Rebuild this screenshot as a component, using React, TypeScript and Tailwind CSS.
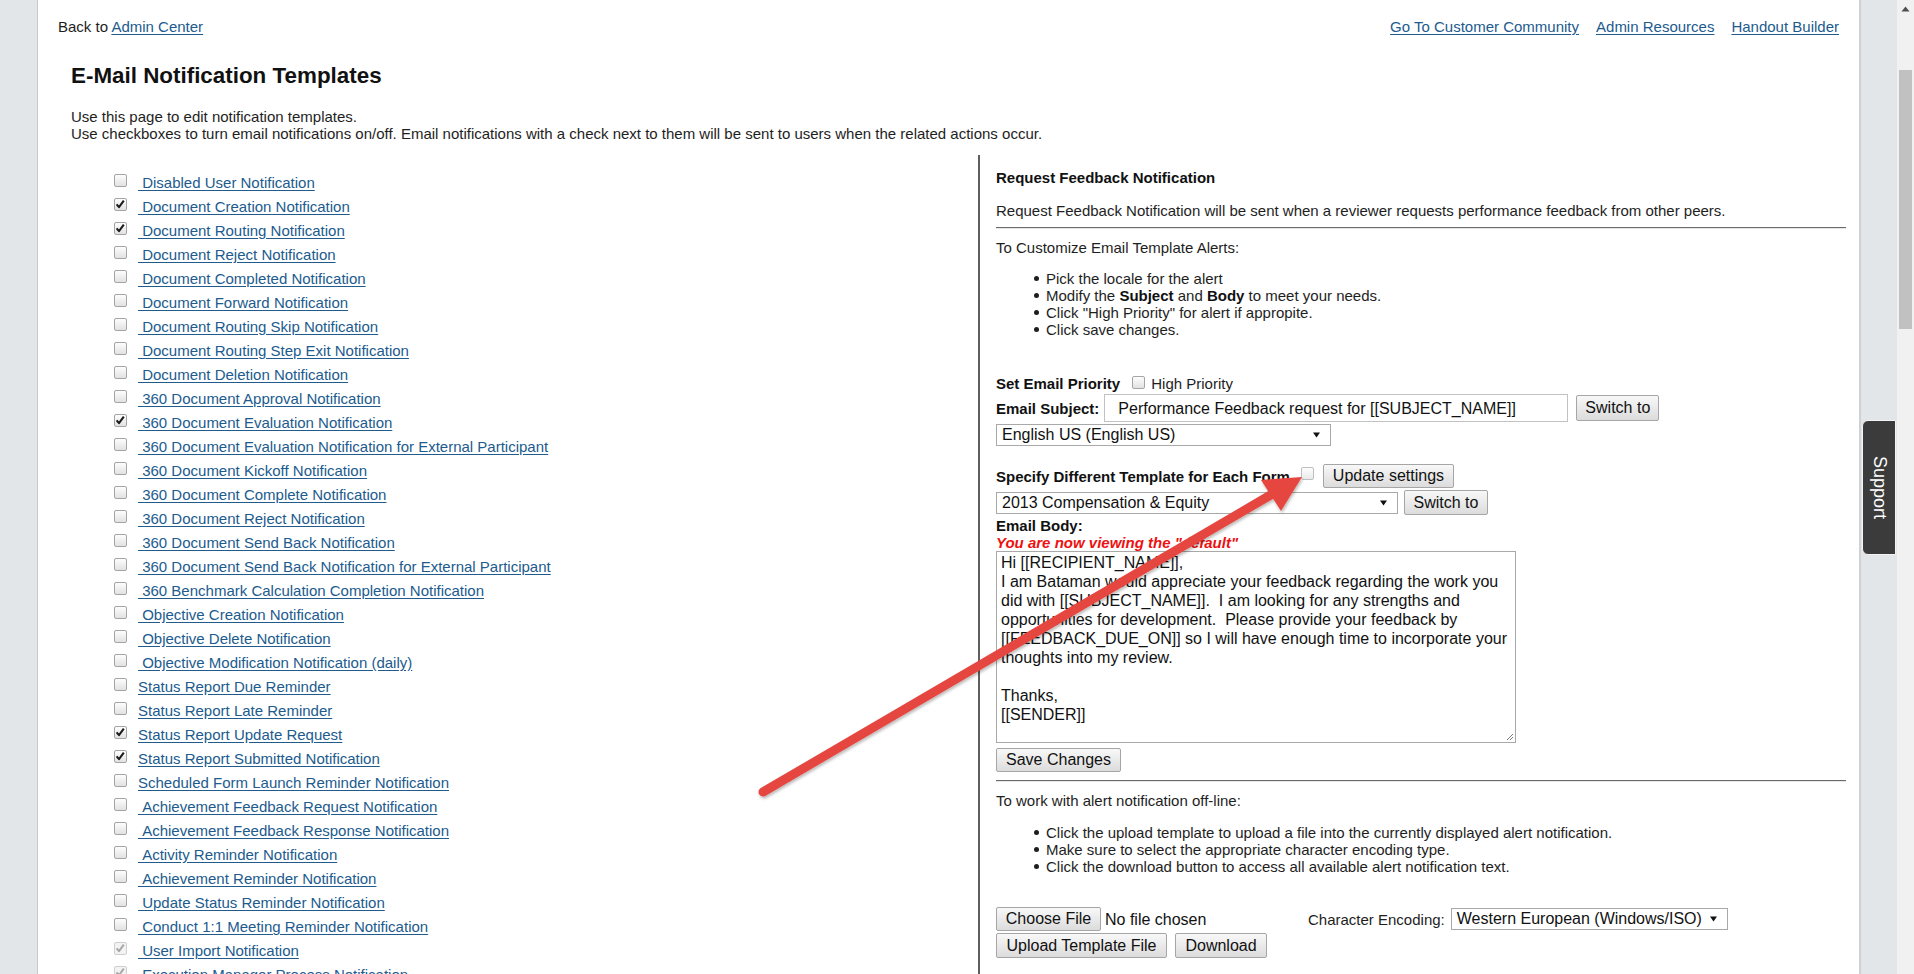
import React from "react";

type Item = { t: string; s: 0 | 1 | 2; sp: boolean };

const items: Item[] = [
  { t: "Disabled User Notification", s: 0, sp: true },
  { t: "Document Creation Notification", s: 1, sp: true },
  { t: "Document Routing Notification", s: 1, sp: true },
  { t: "Document Reject Notification", s: 0, sp: true },
  { t: "Document Completed Notification", s: 0, sp: true },
  { t: "Document Forward Notification", s: 0, sp: true },
  { t: "Document Routing Skip Notification", s: 0, sp: true },
  { t: "Document Routing Step Exit Notification", s: 0, sp: true },
  { t: "Document Deletion Notification", s: 0, sp: true },
  { t: "360 Document Approval Notification", s: 0, sp: true },
  { t: "360 Document Evaluation Notification", s: 1, sp: true },
  { t: "360 Document Evaluation Notification for External Participant", s: 0, sp: true },
  { t: "360 Document Kickoff Notification", s: 0, sp: true },
  { t: "360 Document Complete Notification", s: 0, sp: true },
  { t: "360 Document Reject Notification", s: 0, sp: true },
  { t: "360 Document Send Back Notification", s: 0, sp: true },
  { t: "360 Document Send Back Notification for External Participant", s: 0, sp: true },
  { t: "360 Benchmark Calculation Completion Notification", s: 0, sp: true },
  { t: "Objective Creation Notification", s: 0, sp: true },
  { t: "Objective Delete Notification", s: 0, sp: true },
  { t: "Objective Modification Notification (daily)", s: 0, sp: true },
  { t: "Status Report Due Reminder", s: 0, sp: false },
  { t: "Status Report Late Reminder", s: 0, sp: false },
  { t: "Status Report Update Request", s: 1, sp: false },
  { t: "Status Report Submitted Notification", s: 1, sp: false },
  { t: "Scheduled Form Launch Reminder Notification", s: 0, sp: false },
  { t: "Achievement Feedback Request Notification", s: 0, sp: true },
  { t: "Achievement Feedback Response Notification", s: 0, sp: true },
  { t: "Activity Reminder Notification", s: 0, sp: true },
  { t: "Achievement Reminder Notification", s: 0, sp: true },
  { t: "Update Status Reminder Notification", s: 0, sp: true },
  { t: "Conduct 1:1 Meeting Reminder Notification", s: 0, sp: true },
  { t: "User Import Notification", s: 2, sp: true },
  { t: "Execution Manager Process Notification", s: 2, sp: true },
];

function Box({ s = 0, className = "" }: { s?: 0 | 1 | 2; className?: string }) {
  const disabled = s === 2;
  return (
    <span
      className={`relative inline-block h-[13px] w-[13px] shrink-0 rounded-[2px] border ${
        disabled
          ? "border-[#cfcfcf] bg-[#f3f3f3]"
          : "border-[#a5a5a5] bg-linear-to-b from-[#fdfdfd] to-[#e2e2e2]"
      } ${className}`}
    >
      {s !== 0 && (
        <svg viewBox="0 0 13 13" width="13" height="13" className="absolute left-[-1px] top-[-1px]">
          <path
            d="M2.6 6.4 L5 9.2 L9.8 2.6"
            stroke={disabled ? "#a8a8a8" : "#1a1a1a"}
            strokeWidth="2"
            fill="none"
            strokeLinejoin="round"
          />
        </svg>
      )}
    </span>
  );
}

function Btn({ children, className = "" }: { children: React.ReactNode; className?: string }) {
  return (
    <span
      className={`inline-flex shrink-0 items-center justify-center rounded-[2px] border border-[#a6a6a6] bg-linear-to-b from-[#f8f8f8] to-[#dcdcdc] px-[8px] text-[16px] leading-[18px] text-[#111] ${className}`}
    >
      {children}
    </span>
  );
}

function Sel({ text, className = "" }: { text: string; className?: string }) {
  return (
    <div
      className={`flex h-[22px] shrink-0 items-center justify-between border border-[#a9a9a9] bg-white pl-[5px] pr-[10px] text-[16px] leading-[18px] text-[#111] ${className}`}
    >
      <span>{text}</span>
      <svg width="7" height="6" viewBox="0 0 7 6">
        <path d="M0 0.5H7L3.5 5.5Z" fill="#111" />
      </svg>
    </div>
  );
}

function Bullet({ children }: { children: React.ReactNode }) {
  return (
    <li className="flex h-[17px] items-center">
      <span className="ml-[38px] mr-[7px] h-[5px] w-[5px] rounded-full bg-[#1e1e1e]" />
      <span>{children}</span>
    </li>
  );
}

const link = "text-[#215b8e] underline decoration-[#215b8e] underline-offset-[2px]";

const bodyLines = [
  "Hi [[RECIPIENT_NAME]],",
  "I am Bataman would appreciate your feedback regarding the work you",
  "did with [[SUBJECT_NAME]].  I am looking for any strengths and",
  "opportunities for development.  Please provide your feedback by",
  "[[FEEDBACK_DUE_ON]] so I will have enough time to incorporate your",
  "thoughts into my review.",
  "",
  "Thanks,",
  "[[SENDER]]",
];

export default function App() {
  return (
    <div className="relative flex h-[974px] w-[1914px] overflow-hidden bg-white font-['Liberation_Sans',Arial,sans-serif] text-[15px] text-[#1e1e1e]">
      {/* left gray strip */}
      <div className="w-[38px] shrink-0 border-r border-[#c6cacf] bg-[#e3e6e9]" />

      {/* main */}
      <main className="flex w-[1821px] shrink-0 flex-col">
        <div className="flex justify-between px-[20px] pt-[18px] leading-[17px]">
          <div>
            Back to <a className={link}>Admin Center</a>
          </div>
          <div className="flex gap-[17px]">
            <a className={link}>Go To Customer Community</a>
            <a className={link}>Admin Resources</a>
            <a className={link}>Handout Builder</a>
          </div>
        </div>

        <h1 className="ml-[33px] mt-[28px] text-[22.4px] font-bold leading-[26px] text-[#111]">
          E-Mail Notification Templates
        </h1>

        <div className="ml-[33px] mt-[19px] leading-[17px]">
          <div>Use this page to edit notification templates.</div>
          <div>
            Use checkboxes to turn email notifications on/off. Email notifications with a check next to them will be
            sent to users when the related actions occur.
          </div>
        </div>

        <div className="mt-[13px] flex flex-1">
          {/* left list */}
          <div className="w-[940px] shrink-0 pl-[76px] pt-[16px]">
            {items.map((it) => (
              <div key={it.t} className="flex h-[24px] items-start">
                <Box s={it.s} className="mt-[3px]" />
                <a className={`${link} ml-[11px] whitespace-pre leading-[24px]`}>
                  {(it.sp ? "\u00a0" : "") + it.t}
                </a>
              </div>
            ))}
          </div>

          {/* right panel */}
          <div className="flex w-[881px] shrink-0 flex-col border-l-2 border-[#5f5f5f] pl-[16px] pr-[13px] pt-[14px] leading-[17px]">
            <div className="font-bold text-[#111]">Request Feedback Notification</div>
            <div className="mt-[16px]">
              Request Feedback Notification will be sent when a reviewer requests performance feedback from other peers.
            </div>
            <div className="mt-[8px] h-[2px] border-t border-b border-t-[#6b6b6b] border-b-[#e6e6e6]" />
            <div className="mt-[10px]">To Customize Email Template Alerts:</div>
            <ul className="mt-[14px]">
              <Bullet>Pick the locale for the alert</Bullet>
              <Bullet>
                Modify the <b className="text-[#111]">Subject</b> and <b className="text-[#111]">Body</b> to meet your
                needs.
              </Bullet>
              <Bullet>Click "High Priority" for alert if appropite.</Bullet>
              <Bullet>Click save changes.</Bullet>
            </ul>

            <div className="mt-[37px] flex h-[17px] items-center">
              <span className="font-bold text-[#111]">Set Email Priority</span>
              <Box className="ml-[12px] mb-[3px]" />
              <span className="ml-[6px]">High Priority</span>
            </div>

            <div className="mt-[2px] flex h-[28px] items-center">
              <span className="font-bold text-[#111]">Email Subject:</span>
              <div className="ml-[5px] flex h-[28px] w-[464px] items-center border border-[#c2c2c2] pl-[13px] text-[16px] text-[#111]">
                Performance Feedback request for [[SUBJECT_NAME]]
              </div>
              <Btn className="ml-[8px] h-[26px]">Switch to</Btn>
            </div>

            <Sel text="English US (English US)" className="mt-[2px] w-[335px]" />

            <div className="mt-[18px] flex h-[24px] items-center">
              <span className="font-bold text-[#111]">Specify Different Template for Each Form</span>
              <Box className="ml-[11px] mb-[6px] opacity-70" />
              <Btn className="ml-[9px] h-[24px] w-[131px]">Update settings</Btn>
            </div>

            <div className="mt-[2px] flex h-[25px] items-center">
              <Sel text="2013 Compensation & Equity" className="w-[402px]" />
              <Btn className="ml-[6px] h-[25px] w-[84px]">Switch to</Btn>
            </div>

            <div className="mt-[2px] font-bold text-[#111]">Email Body:</div>
            <div className="font-bold italic text-[#ee1111]">You are now viewing the "default"</div>

            <div className="relative mt-[0px] h-[192px] w-[520px] border border-[#a9a9a9] px-[4px] pt-[1px] text-[16px] leading-[19px] text-[#111]">
              {bodyLines.map((l, i) => (
                <div key={i} className="h-[19px] whitespace-pre">
                  {l}
                </div>
              ))}
              <svg width="9" height="9" viewBox="0 0 9 9" className="absolute bottom-[1px] right-[1px]">
                <path d="M8 2 L2 8 M8 5 L5 8" stroke="#7a7a7a" strokeWidth="1" />
              </svg>
            </div>

            <div className="mt-[5px]">
              <Btn className="h-[24px] w-[125px]">Save Changes</Btn>
            </div>

            <div className="mt-[8px] h-[2px] border-t border-b border-t-[#6b6b6b] border-b-[#e6e6e6]" />
            <div className="mt-[10px]">To work with alert notification off-line:</div>
            <ul className="mt-[15px]">
              <Bullet>Click the upload template to upload a file into the currently displayed alert notification.</Bullet>
              <Bullet>Make sure to select the appropriate character encoding type.</Bullet>
              <Bullet>Click the download button to access all available alert notification text.</Bullet>
            </ul>

            <div className="mt-[32px] flex h-[24px] items-center">
              <div className="flex w-[312px] items-center">
                <Btn className="h-[24px] w-[105px]">Choose File</Btn>
                <span className="ml-[4px] text-[16px] text-[#111]">No file chosen</span>
              </div>
              <span>Character Encoding:</span>
              <Sel text="Western European (Windows/ISO)" className="ml-[6px] h-[20px] w-[277px] pr-[8px]" />
            </div>
            <div className="mt-[2px] flex h-[25px] items-center">
              <Btn className="h-[25px] w-[171px]">Upload Template File</Btn>
              <Btn className="ml-[8px] h-[25px] w-[92px]">Download</Btn>
            </div>
          </div>
        </div>
      </main>

      {/* right gray strip with support tab */}
      <div className="w-[38px] shrink-0 border-l-2 border-[#cfd2d5] bg-[#e3e6e9] pl-[1px] pt-[420px]">
        <div className="flex h-[135px] w-[34px] items-center justify-center rounded-l-[6px] border border-[#f4f4f4] bg-[#3b3b3b]">
          <span className="text-[18px] font-normal text-white [writing-mode:vertical-rl]">Support</span>
        </div>
      </div>

      {/* scrollbar */}
      <div className="flex w-[17px] shrink-0 flex-col items-center bg-[#f1f1f1]">
        <svg width="9" height="6" viewBox="0 0 9 6" className="mt-[6px]">
          <path d="M0.5 5.5H8.5L4.5 0.5Z" fill="#505050" />
        </svg>
        <div className="ml-[2px] mt-[58px] h-[259px] w-[13px] self-start bg-[#c1c1c1]" />
      </div>

      {/* annotation arrow */}
      <svg className="pointer-events-none absolute left-0 top-0" width="1914" height="974" viewBox="0 0 1914 974">
        <defs>
          <filter id="sh" x="-10%" y="-10%" width="120%" height="120%">
            <feDropShadow dx="1" dy="2" stdDeviation="1.5" floodColor="#000" floodOpacity="0.28" />
          </filter>
        </defs>
        <g filter="url(#sh)">
          <line x1="763" y1="792" x2="1274" y2="493" stroke="#e5473f" strokeWidth="9" strokeLinecap="round" />
          <polygon points="1302,477 1261,480 1281,511" fill="#e5473f" />
        </g>
      </svg>
    </div>
  );
}
